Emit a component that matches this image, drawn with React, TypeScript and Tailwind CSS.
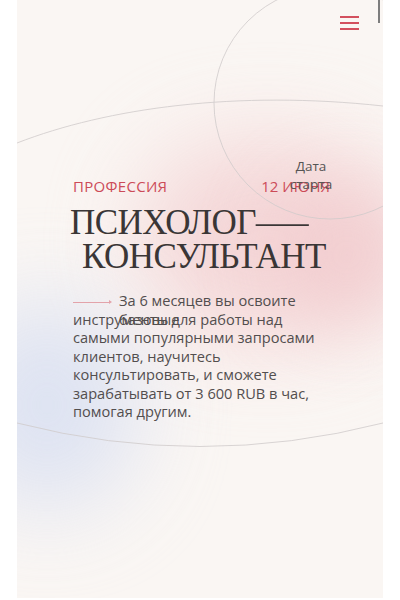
export default function App() {
  return (
    <div className="flex h-[600px] w-full justify-center bg-white">
      <div className="relative h-[598px] w-[366px] overflow-hidden bg-[#faf6f3] font-['Open_Sans',sans-serif]">
        {/* мягкие цветные пятна */}
        <div className="absolute left-[120px] top-[140px] h-[200px] w-[260px] rounded-full bg-[#f3cfd1] opacity-80 blur-[45px]" />
        <div className="absolute left-[260px] top-[190px] h-[130px] w-[140px] rounded-full bg-[#f1c9cc] opacity-80 blur-[40px]" />
        <div className="absolute -left-[60px] top-[300px] h-[210px] w-[180px] rounded-full bg-[#d6def2] opacity-80 blur-[45px]" />

        {/* линии фона */}
        <svg className="absolute inset-0" width="366" height="598" viewBox="0 0 366 598" fill="none">
          <circle cx="313" cy="103" r="116" stroke="#cfcaca" strokeWidth="0.8" />
          <path d="M0 143 C 90 108, 220 90, 366 106" stroke="#cfcaca" strokeWidth="0.8" />
          <path d="M0 423 Q 183 470 366 423" stroke="#cfcaca" strokeWidth="0.8" />
        </svg>

        {/* полоса прокрутки */}
        <div className="absolute right-[3px] top-0 h-[23px] w-[2px] bg-[#7d7d7d]" />

        <div className="relative flex flex-col">
          <div className="flex justify-end pr-[24px] pt-[16px]">
            <button className="flex w-[19px] flex-col gap-[4px]">
              <span className="h-[2px] w-full bg-[#d3505e]" />
              <span className="h-[2px] w-full bg-[#d3505e]" />
              <span className="h-[2px] w-full bg-[#d3505e]" />
            </button>
          </div>

          <div className="mt-[146px] flex items-center justify-between pl-[56px] pr-[53px] text-[15px] leading-[20px] text-[#cc4b58]">
            <span className="tracking-[0.02em]">ПРОФЕССИЯ</span>
            <span className="relative">
              12 ИЮНЯ
              <span className="absolute -top-[19px] right-[-4px] w-[46px] text-center text-[13.5px] leading-[18px] text-[#555]">
                Дата старта
              </span>
            </span>
          </div>

          <h1 className="mt-[10px] pl-[53px] font-['Liberation_Serif',serif] text-[35px] leading-[34px] tracking-[-0.015em] text-[#3a3636]">
            <span className="block">
              ПСИХОЛОГ<span className="inline-block origin-left scale-x-[1.5]">—</span>
            </span>
            <span className="block pl-[12px]">КОНСУЛЬТАНТ</span>
          </h1>

          <div className="relative mt-[17px] pl-[56px] pr-[20px] text-[14.6px] leading-[18.5px] text-[#524e4e]">
            <p>
              <span className="mr-[7px] inline-flex items-center align-middle">
                <span className="h-px w-[36px] bg-[#e3a3aa]" />
                <span className="h-0 w-0 border-y-[2px] border-l-[3px] border-y-transparent border-l-[#e3a3aa]" />
              </span>
              За 6 месяцев вы освоите
              <br />
              инструменты для работы над
              <br />
              самыми популярными запросами
              <br />
              клиентов, научитесь
              <br />
              консультировать, и сможете
              <br />
              зарабатывать от 3 600 RUB в час,
              <br />
              помогая другим.
            </p>
            <span className="absolute left-[102px] top-[18.5px]">базовые</span>
          </div>
        </div>
      </div>
    </div>
  );
}
